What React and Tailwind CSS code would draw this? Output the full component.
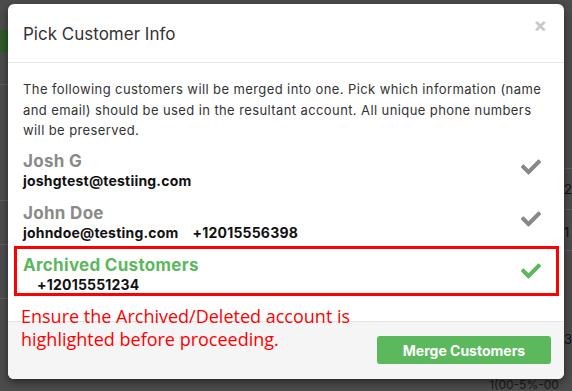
import React from "react";
import { FaCheck } from "react-icons/fa";

function Row({ name, nameClass, children, checkClass }) {
  return (
    <div className="flex items-start justify-between h-[52px] pr-[6px]">
      <div className="flex flex-col">
        <div className={`text-[17px] leading-[20px] font-bold tracking-[0.3px] ${nameClass}`}>{name}</div>
        <div className="text-[14px] leading-[20px] font-bold tracking-[0.2px] text-[#111] whitespace-pre">{children}</div>
      </div>
      <FaCheck className={`mt-[6px] w-[24px] h-[20px] ${checkClass}`} />
    </div>
  );
}

function Rule() {
  return <div className="h-px w-full bg-[#5d5d5d]" />;
}

export default function App() {
  return (
    <div className="relative w-[572px] h-[391px] overflow-hidden bg-[#4c4c4c]" style={{ fontFamily: "Inter, 'Noto Sans', sans-serif" }}>
      {/* underlying page, dimmed */}
      <div className="flex h-full justify-between">
        <div className="w-[10px] flex flex-col pt-[30px]">
          <div className="h-[22px] bg-[#2f5a26]" />
          <div className="h-[32px]" />
          <Rule />
          <div className="h-[115px]" />
          <Rule />
          <div className="h-[43px]" />
          <Rule />
          <div className="h-[53px]" />
          <Rule />
        </div>
        <div className="flex flex-col justify-end">
          <div className="text-[12px] leading-[12px] text-[#1a1a1a] pl-[474px]">1(00-5%-00</div>
        </div>
        <div className="w-[8px] flex flex-col pt-[168px] text-[13px] leading-[16px] text-[#111]">
          <Rule />
          <div className="h-[40px] pt-[12px]">2</div>
          <Rule />
          <div className="h-[40px] pt-[14px]">1</div>
          <Rule />
          <div className="h-[94px] pt-[80px]">3</div>
        </div>
      </div>

      {/* modal */}
      <div className="absolute left-[8px] top-[4px] w-[556px] h-[375px] bg-white rounded-[6px] shadow-[0_3px_9px_rgba(0,0,0,0.5)] flex flex-col overflow-hidden">
        <div className="h-[59px] shrink-0 border-b border-[#e5e5e5] px-[15px] flex items-center justify-between">
          <div className="text-[17px] text-[#333] pt-[4px]">Pick Customer Info</div>
          <div className="text-[20px] font-bold text-[#c8c8c8] leading-none pr-[2px] -mt-[16px]">×</div>
        </div>
        <div className="flex-1 px-[15px] pt-[16px]">
          <p className="text-[13px] leading-[20.5px] tracking-[0.4px] text-[#333]">
            The following customers will be merged into one. Pick which information (name and email) should be used in the resultant account. All unique phone numbers will be preserved.
          </p>
          <div className="mt-[10px] flex flex-col">
            <Row name="Josh G" nameClass="text-[#8a8a8a]" checkClass="text-[#888]">joshgtest@testiing.com</Row>
            <Row name="John Doe" nameClass="text-[#8a8a8a]" checkClass="text-[#888]">{"johndoe@testing.com    +12015556398"}</Row>
            <Row name="Archived Customers" nameClass="text-[#5cb85c]" checkClass="text-[#5cb85c]">{"    +12015551234"}</Row>
          </div>
        </div>
        <div className="h-[58px] shrink-0 border-t border-[#e5e5e5] bg-[#f5f5f5] flex items-start justify-end pt-[14px] pr-[13px]">
          <button className="w-[174px] h-[28px] rounded-[3px] bg-[#5cb85c] text-white text-[14px] font-bold">Merge Customers</button>
        </div>

        {/* annotation overlay */}
        <div className="absolute left-[6px] top-[242px] w-[545px] h-[50px] border-[3px] border-[#ff0000]" />
        <div className="absolute left-[13px] top-[301px] text-[#ff0000] text-[18px] leading-[23px]" style={{ fontFamily: "'Open Sans', sans-serif" }}>
          Ensure the Archived/Deleted account is<br />highlighted before proceeding.
        </div>
      </div>
    </div>
  );
}
